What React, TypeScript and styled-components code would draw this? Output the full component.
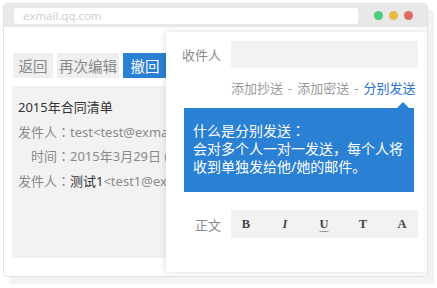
import styled, { createGlobalStyle } from "styled-components";

const GlobalStyle = createGlobalStyle`
  html, body {
    margin: 0;
    padding: 0;
    background: #ffffff;
  }
  body {
    font-family: "Noto Sans", "Noto Sans CJK SC", sans-serif;
    text-spacing-trim: space-all;
  }
`;

const BLUE = "#2a80d2";

const Stage = styled.div`
  width: 437px;
  height: 288px;
  padding: 3px 0 0 3px;
  box-sizing: border-box;
`;

const Frame = styled.div`
  width: 425px;
  height: 274px;
  box-sizing: border-box;
  border: 1px solid #e2e2e2;
  border-radius: 4px;
  background: #ffffff;
  box-shadow: 6px 7px 0 0 #f3f3f3;
  display: flex;
  flex-direction: column;
  overflow: hidden;
`;

const TitleBar = styled.div`
  height: 23px;
  flex: none;
  background: #e8e8e8;
  display: flex;
  align-items: center;
  padding: 0 14px 0 10px;
  gap: 16px;
`;

const UrlBar = styled.div`
  flex: 1;
  height: 16px;
  background: #ffffff;
  border-radius: 3px;
  display: flex;
  align-items: center;
  padding-left: 9px;
  font-family: "Open Sans", sans-serif;
  font-size: 11.5px;
  color: #cdcdcd;
`;

const Dots = styled.div`
  display: flex;
  gap: 6px;
`;

const Dot = styled.span<{ color: string }>`
  width: 9px;
  height: 9px;
  border-radius: 50%;
  background: ${(p) => p.color};
`;

const Content = styled.div`
  flex: 1;
  position: relative;
  display: flex;
`;

const LeftPane = styled.div`
  flex: 1;
  display: flex;
  flex-direction: column;
  padding: 26px 0 18px 8px;
  overflow: hidden;
`;

const ButtonRow = styled.div`
  display: flex;
  gap: 4px;
  margin-left: 1px;
  margin-bottom: 8px;
`;

const Button = styled.div<{ primary?: boolean; w: number }>`
  width: ${(p) => p.w}px;
  height: 25px;
  display: flex;
  align-items: center;
  justify-content: center;
  font-size: 14.5px;
  background: ${(p) => (p.primary ? BLUE : "#efefef")};
  color: ${(p) => (p.primary ? "#ffffff" : "#888888")};
`;

const MailCard = styled.div`
  flex: 1;
  background: #f2f2f2;
  padding: 9px 0 0 6px;
  font-size: 13px;
  line-height: 24.5px;
  white-space: nowrap;
`;

const Subject = styled.div`
  color: #333333;
`;

const MetaRow = styled.div`
  display: flex;
  color: #8a8a8a;
`;

const MetaLabel = styled.span`
  width: 52px;
  text-align: right;
  flex: none;
`;

// full-width colon centred in its cell, as in the original UI font
const Colon = styled.span`
  font-family: "Noto Sans CJK JP", "Noto Sans CJK SC", sans-serif;
`;

const Strong = styled.span`
  color: #333333;
`;

const Popup = styled.div`
  position: absolute;
  top: 5px;
  right: 0;
  bottom: 4px;
  left: 162px;
  background: #ffffff;
  box-shadow: 0 0 7px rgba(0, 0, 0, 0.14);
  padding: 9px 9px 0 0;
  display: flex;
  flex-direction: column;
`;

const FieldRow = styled.div`
  display: flex;
  align-items: center;
`;

const FieldLabel = styled.div`
  width: 55px;
  padding-right: 10px;
  text-align: right;
  font-size: 13px;
  color: #8a8a8a;
  flex: none;
`;

const InputBox = styled.div`
  flex: 1;
  height: 27px;
  background: #f2f2f2;
`;

const Links = styled.div`
  margin: 10px 0 0 65px;
  font-size: 13px;
  line-height: 20px;
  color: #9a9a9a;
  white-space: nowrap;
`;

const Sep = styled.span`
  padding: 0 5px;
`;

const Link = styled.span`
  color: #2a72cc;
`;

const Tip = styled.div`
  position: relative;
  margin: 10px 4px 0 18px;
  height: 84px;
  box-sizing: border-box;
  background: ${BLUE};
  color: #ffffff;
  font-size: 14px;
  line-height: 18px;
  padding: 13px 4px 0 9px;

  &::before {
    content: "";
    position: absolute;
    top: -6px;
    right: 5px;
    border-left: 6px solid transparent;
    border-right: 6px solid transparent;
    border-bottom: 6px solid ${BLUE};
  }
`;

const ToolbarRow = styled(FieldRow)`
  margin-top: 18px;
`;

const Toolbar = styled.div`
  flex: 1;
  height: 28px;
  background: #f2f2f2;
  display: flex;
  align-items: center;
  gap: 13px;
  padding-left: 2px;
`;

const Tool = styled.span<{ italic?: boolean; underline?: boolean }>`
  width: 26px;
  text-align: center;
  font-family: "Liberation Serif", "DejaVu Serif", serif;
  font-weight: bold;
  font-size: 12.5px;
  color: #444444;
  font-style: ${(p) => (p.italic ? "italic" : "normal")};
  text-decoration: ${(p) => (p.underline ? "underline" : "none")};
  text-decoration-color: #999999;
  text-underline-offset: 3px;
`;

export default function App() {
  return (
    <Stage>
      <GlobalStyle />
      <Frame>
        <TitleBar>
          <UrlBar>exmail.qq.com</UrlBar>
          <Dots>
            <Dot color="#4ecb7f" />
            <Dot color="#e9b93d" />
            <Dot color="#e16b5f" />
          </Dots>
        </TitleBar>
        <Content>
          <LeftPane>
            <ButtonRow>
              <Button w={40}>返回</Button>
              <Button w={62}>再次编辑</Button>
              <Button w={44} primary>
                撤回
              </Button>
            </ButtonRow>
            <MailCard>
              <Subject>2015年合同清单</Subject>
              <MetaRow>
                <MetaLabel>
                  发件人<Colon>：</Colon>
                </MetaLabel>
                <span>test&lt;test@exmail.qq.com&gt;</span>
              </MetaRow>
              <MetaRow>
                <MetaLabel>
                  时间<Colon>：</Colon>
                </MetaLabel>
                <span>2015年3月29日 (星期日)</span>
              </MetaRow>
              <MetaRow>
                <MetaLabel>
                  发件人<Colon>：</Colon>
                </MetaLabel>
                <span>
                  <Strong>测试1</Strong>&lt;test1@exmail.qq.com&gt;
                </span>
              </MetaRow>
            </MailCard>
          </LeftPane>
          <Popup>
            <FieldRow>
              <FieldLabel>收件人</FieldLabel>
              <InputBox />
            </FieldRow>
            <Links>
              添加抄送<Sep>-</Sep>添加密送<Sep>-</Sep>
              <Link>分别发送</Link>
            </Links>
            <Tip>
              什么是分别发送<Colon>：</Colon>
              <br />
              会对多个人一对一发送，每个人将
              <br />
              收到单独发给他/她的邮件。
            </Tip>
            <ToolbarRow>
              <FieldLabel>正文</FieldLabel>
              <Toolbar>
                <Tool>B</Tool>
                <Tool italic>I</Tool>
                <Tool underline>U</Tool>
                <Tool>T</Tool>
                <Tool>A</Tool>
              </Toolbar>
            </ToolbarRow>
          </Popup>
        </Content>
      </Frame>
    </Stage>
  );
}
